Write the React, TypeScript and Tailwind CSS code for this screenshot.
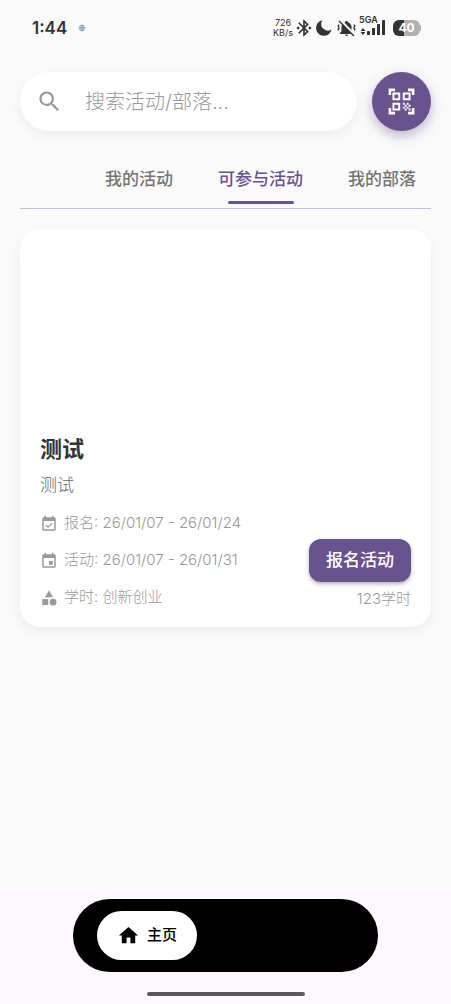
import type { ReactNode } from "react";
import { MdBluetoothConnected, MdCategory, MdEvent, MdHome, MdQrCodeScanner, MdSearch } from "react-icons/md";

const tabs = [
  { label: "我的活动", active: false },
  { label: "可参与活动", active: true },
  { label: "我的部落", active: false },
];

function EventCheckIcon() {
  return (
    <svg viewBox="0 0 24 24" className="size-[18px]" fill="currentColor" aria-hidden="true">
      <path d="M19 3h-1V1h-2v2H8V1H6v2H5a2 2 0 0 0-2 2v14a2 2 0 0 0 2 2h14a2 2 0 0 0 2-2V5a2 2 0 0 0-2-2zm0 16H5V8h14v11z" />
      <path d="m7.8 13.3 3 3 5.4-5.4" fill="none" stroke="currentColor" strokeWidth="1.6" />
    </svg>
  );
}

function MutedBellIcon() {
  return (
    <svg viewBox="0 0 22 20" className="h-[19px] w-[21px]" aria-hidden="true">
      <path d="M11 2.2c-.9 0-1.4.6-1.4 1.3C7 4.2 5.7 6.300 5.700 8.800V13L4 15v.8h14V15l-1.700-2V8.800c0-2.500-1.300-4.600-3.900-5.300 0-.7-.5-1.300-1.400-1.300zM9.200 16.700a1.900 1.900 0 0 0 3.600 0z" fill="#333" />
      <path d="M4.300 1.200 19.700 17" stroke="#fafafa" strokeWidth="3" />
      <path d="M3.200 2 18.800 18" stroke="#333" strokeWidth="1.500" />
      <path d="m3.300 6-1.200 1.500 1.200 1.600-1.200 1.600 1 1.300M18.700 6l1.200 1.500-1.200 1.600 1.200 1.600-1 1.300" fill="none" stroke="#333" strokeWidth="1.300" />
    </svg>
  );
}

function SignalIcon() {
  return (
    <svg viewBox="0 0 30 20" className="h-5 w-[30px]" fill="#333" aria-hidden="true">
      <path d="m6 10 2.500 3h-5zM6 17l2.500-3h-5z" />
      <rect x="10" y="13" width="3" height="4" rx=".6" />
      <rect x="15" y="10" width="3" height="7" rx=".6" />
      <rect x="20" y="6" width="3" height="11" rx=".6" />
      <rect x="25" y="2" width="3" height="15" rx=".6" />
    </svg>
  );
}

function StatusBar() {
  return (
    <header className="flex h-14 items-center justify-between pr-[30px] pl-8 text-[#333]">
      <div className="flex items-center gap-[11px]">
        <time className="text-[17px] leading-6 font-semibold">1:44</time>
        <svg viewBox="0 0 8 8" className="size-2" aria-hidden="true">
          <circle cx="4" cy="4" r="3.500" fill="#c3dcec" />
          <path d="M1 3.300h6M1.500 5h5M2.500 1.500h3M2.700 6.500h2.600" stroke="#688398" strokeWidth=".8" />
        </svg>
      </div>
      <div className="flex items-center">
        <div className="text-center text-[9px] leading-[10px]">
          <div>726</div>
          <div>KB/s</div>
        </div>
        <MdBluetoothConnected className="ml-px size-5" />
        <svg viewBox="0 0 16 16" className="ml-0.5 size-4" fill="currentColor" aria-hidden="true">
          <path d="M6.500.3A6.500 6.500 0 0 0 15.500 9.400 7.800 7.800 0 1 1 6.500.3z" />
        </svg>
        <div className="ml-1">
          <MutedBellIcon />
        </div>
        <div className="relative">
          <SignalIcon />
          <span className="absolute -top-1 left-0.5 text-[9px] leading-3 font-semibold">5GA</span>
        </div>
        <div className="ml-1.5 flex h-4 w-[27px] items-center justify-center rounded-[6px] bg-linear-to-r from-[#333] from-40% to-[#b0b0b0] to-40% text-[12px] leading-4 font-bold text-white">
          40
        </div>
        <span className="h-1.5 w-px rounded-r bg-[#b0b0b0]" />
      </div>
    </header>
  );
}

function InfoRow({ icon, children, extra }: { icon: ReactNode; children: ReactNode; extra?: ReactNode }) {
  return (
    <li className="flex h-[37px] items-center gap-1.5">
      {icon}
      <span className="font-light">{children}</span>
      {extra}
    </li>
  );
}

export default function App() {
  return (
    <div className="flex min-h-screen flex-col bg-[#fafafa] font-['Inter','Noto_Sans_CJK_SC',sans-serif]">
      <StatusBar />

      <main className="flex flex-1 flex-col px-5 pt-4">
        <div className="flex items-center gap-[15px]">
          <label className="flex h-[59px] min-w-0 flex-1 items-center gap-[22px] rounded-full bg-white px-4 shadow-[0_4px_12px_rgba(0,0,0,0.05)]">
            <MdSearch className="size-[27px] shrink-0 text-[#999]" aria-hidden="true" />
            <input
              type="text"
              aria-label="搜索活动/部落"
              placeholder="搜索活动/部落..."
              className="w-full min-w-0 bg-transparent text-[20px] font-light outline-none placeholder:text-[#999]"
            />
          </label>
          <button
            type="button"
            aria-label="扫码"
            className="flex size-[59px] shrink-0 items-center justify-center rounded-full bg-[#69538f] text-white shadow-[0_5px_12px_rgba(105,83,143,0.4)]"
          >
            <MdQrCodeScanner className="size-[31px]" />
          </button>
        </div>

        <nav className="mt-6 flex h-[54px] justify-end gap-[45px] overflow-hidden border-b border-[#c3bfd1] pr-[15px]">
          {tabs.map((tab) =>
            tab.active ? (
              <button key={tab.label} type="button" className="flex flex-col items-center text-[17px] leading-6 font-medium text-[#69538f]">
                <span className="mt-3">{tab.label}</span>
                <span className="mt-[10px] h-[3px] w-[66px] rounded-full bg-[#69538f]" />
              </button>
            ) : (
              <button key={tab.label} type="button" className="flex flex-col items-center text-[17px] leading-6 font-medium text-[#757575]">
                <span className="mt-3">{tab.label}</span>
              </button>
            ),
          )}
        </nav>

        <article className="mt-5 rounded-[20px] bg-white px-5 pb-[11px] shadow-[0_4px_12px_rgba(0,0,0,0.05)]">
          <div className="h-[204px]" />
          <h2 className="text-[22px] leading-8 font-bold text-[#333]">测试</h2>
          <p className="mt-2 text-[17px] leading-6 font-light text-[#666]">测试</p>
          <div className="mt-2 flex items-end text-[15px] text-[#999]">
            <ul className="min-w-0 flex-1">
              <InfoRow icon={<EventCheckIcon />}>报名: 26/01/07 - 26/01/24</InfoRow>
              <InfoRow icon={<MdEvent className="size-[18px]" />}>活动: 26/01/07 - 26/01/31</InfoRow>
              <InfoRow icon={<MdCategory className="size-[18px]" />}>学时: 创新创业</InfoRow>
            </ul>
            <div className="flex flex-col items-end">
              <button
                type="button"
                className="h-[43px] rounded-xl bg-[#69538f] px-[17px] text-[17px] font-medium text-white shadow-[0_2px_4px_rgba(0,0,0,0.3)]"
              >
                报名活动
              </button>
              <span className="flex h-[34px] items-center font-light">123学时</span>
            </div>
          </div>
        </article>
      </main>

      <footer className="flex flex-col items-center bg-[#fdf8ff] px-[73px] pt-3 pb-2">
        <nav className="flex h-[73px] w-full items-center rounded-full bg-black px-6">
          <a href="#home" className="flex h-[49px] items-center gap-[7px] rounded-full bg-white px-5 text-[15px] font-medium text-black">
            <MdHome className="size-[23px]" aria-hidden="true" />
            主页
          </a>
        </nav>
        <div className="mt-5 h-[4px] w-[158px] rounded-full bg-[#5d595f]" />
      </footer>
    </div>
  );
}
